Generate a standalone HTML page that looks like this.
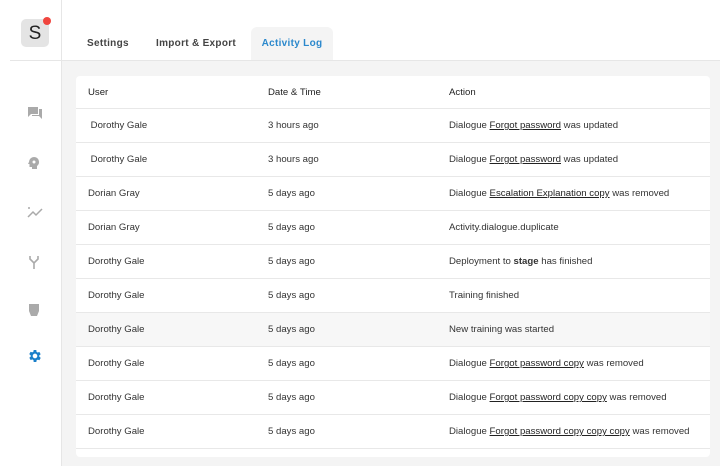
<!DOCTYPE html><html><head><style>
body{margin:0;width:720px;height:466px;font-family:"Liberation Sans",sans-serif;background:#fff;position:relative;overflow:hidden;color:#333}
.sb{position:absolute;left:0;top:0;width:61px;height:466px;border-right:1px solid #e6e6e6;background:#fff}
.hl{position:absolute;left:10px;top:60px;width:52px;height:1px;background:#e6e6e6}
.logo{position:absolute;left:21px;top:19px;width:28px;height:28px;border-radius:5px;background:#e4e4e4;font-size:19px;text-align:center;line-height:29px;color:#222}
.dot{position:absolute;left:43px;top:17px;width:8px;height:8px;border-radius:50%;background:#f0453e}
.ic{position:absolute;left:27px}
.top{position:absolute;left:62px;top:0;right:0;height:60px;border-bottom:1px solid #e6e6e6}
.tab{position:absolute;top:27px;height:33px;line-height:33px;font-size:10px;font-weight:bold;color:#444;letter-spacing:.3px}
.main{position:absolute;left:62px;top:61px;right:0;bottom:0;background:#f4f4f4}
table{position:absolute;left:76px;top:76px;width:634px;border-collapse:collapse;background:#fff;font-size:9.6px;border-radius:4px;table-layout:fixed}
td,th{height:33px;border-bottom:1px solid #e8e8e8;text-align:left;padding:0;white-space:nowrap}
th{height:32px;font-weight:normal;color:#222}
td:first-child,th:first-child{padding-left:12px;width:180px}
td:nth-child(2),th:nth-child(2){width:181px}
u{text-decoration:underline;color:#222}
tr.g td{background:#f7f7f7}
</style></head><body>
<div class="main"></div>
<div class="sb"></div><div class="hl"></div>
<div class="logo">S</div><div class="dot"></div>
<svg class="ic" style="top:106px" width="16" height="14" viewBox="0 0 16 14"><path d="M1 1h10v7H4l-3 3z" fill="#aaa"/><path d="M12 3h3v10l-3-3H5V9h7z" fill="#aaa"/></svg>
<svg class="ic" style="top:156px" width="14" height="14" viewBox="0 0 14 14"><path d="M7 1a5 5 0 0 0-5 5l-1 2h1.5v3H5v2h5V10a5 5 0 0 0-3-9z" fill="#aaa"/><circle cx="7" cy="6" r="1.5" fill="#fff"/></svg>
<svg class="ic" style="top:205px" width="17" height="14" viewBox="0 0 17 14"><path d="M1 12l5-5 3 3 6-6" stroke="#aaa" stroke-width="1.5" fill="none"/><circle cx="2" cy="3" r="1" fill="#aaa"/></svg>
<svg class="ic" style="top:254px" width="14" height="16" viewBox="0 0 14 16"><path d="M3 2v3l4 4 4-4V2M7 9v6" stroke="#aaa" stroke-width="1.6" fill="none"/></svg>
<svg class="ic" style="top:303px" width="14" height="14" viewBox="0 0 14 14"><path d="M2 1h10v7l-2 5H4L2 8z" fill="#aaa"/></svg>
<svg class="ic" style="top:348px" width="16" height="16" viewBox="0 0 24 24"><path fill="#1a7fc9" d="M19.4 13a7.5 7.5 0 0 0 0-2l2.1-1.6-2-3.5-2.5 1a7 7 0 0 0-1.700-1L15 3h-4l-.4 2.6a7 7 0 0 0-1.7 1l-2.5-1-2 3.5L6.6 11a7.5 7.5 0 0 0 0 2l-2.1 1.6 2 3.5 2.5-1a7 7 0 0 0 1.7 1L11 21h4l.4-2.6a7 7 0 0 0 1.7-1l2.5 1 2-3.5zM13 15.5a3.5 3.5 0 1 1 0-7 3.5 3.5 0 0 1 0 7z" transform="translate(-1 0)"/></svg>
<div class="top"></div>
<div class="tab" style="left:87px">Settings</div>
<div class="tab" style="left:156px">Import &amp; Export</div>
<div class="tab" style="left:251px;width:82px;text-align:center;background:#f4f4f4;border-radius:6px 6px 0 0;color:#2b88cc">Activity Log</div>
<table>
<tr><th>User</th><th>Date &amp; Time</th><th>Action</th></tr>
<tr><td>&nbsp;Dorothy Gale</td><td>3 hours ago</td><td>Dialogue <u>Forgot password</u> was updated</td></tr>
<tr><td>&nbsp;Dorothy Gale</td><td>3 hours ago</td><td>Dialogue <u>Forgot password</u> was updated</td></tr>
<tr><td>Dorian Gray</td><td>5 days ago</td><td>Dialogue <u>Escalation Explanation copy</u> was removed</td></tr>
<tr><td>Dorian Gray</td><td>5 days ago</td><td>Activity.dialogue.duplicate</td></tr>
<tr><td>Dorothy Gale</td><td>5 days ago</td><td>Deployment to <b>stage</b> has finished</td></tr>
<tr><td>Dorothy Gale</td><td>5 days ago</td><td>Training finished</td></tr>
<tr class="g"><td>Dorothy Gale</td><td>5 days ago</td><td>New training was started</td></tr>
<tr><td>Dorothy Gale</td><td>5 days ago</td><td>Dialogue <u>Forgot password copy</u> was removed</td></tr>
<tr><td>Dorothy Gale</td><td>5 days ago</td><td>Dialogue <u>Forgot password copy copy</u> was removed</td></tr>
<tr><td>Dorothy Gale</td><td>5 days ago</td><td>Dialogue <u>Forgot password copy copy copy</u> was removed</td></tr>
<tr><td style="height:8px;border:0"></td><td style="height:8px;border:0"></td><td style="height:8px;border:0"></td></tr>
</table>
</body></html>
